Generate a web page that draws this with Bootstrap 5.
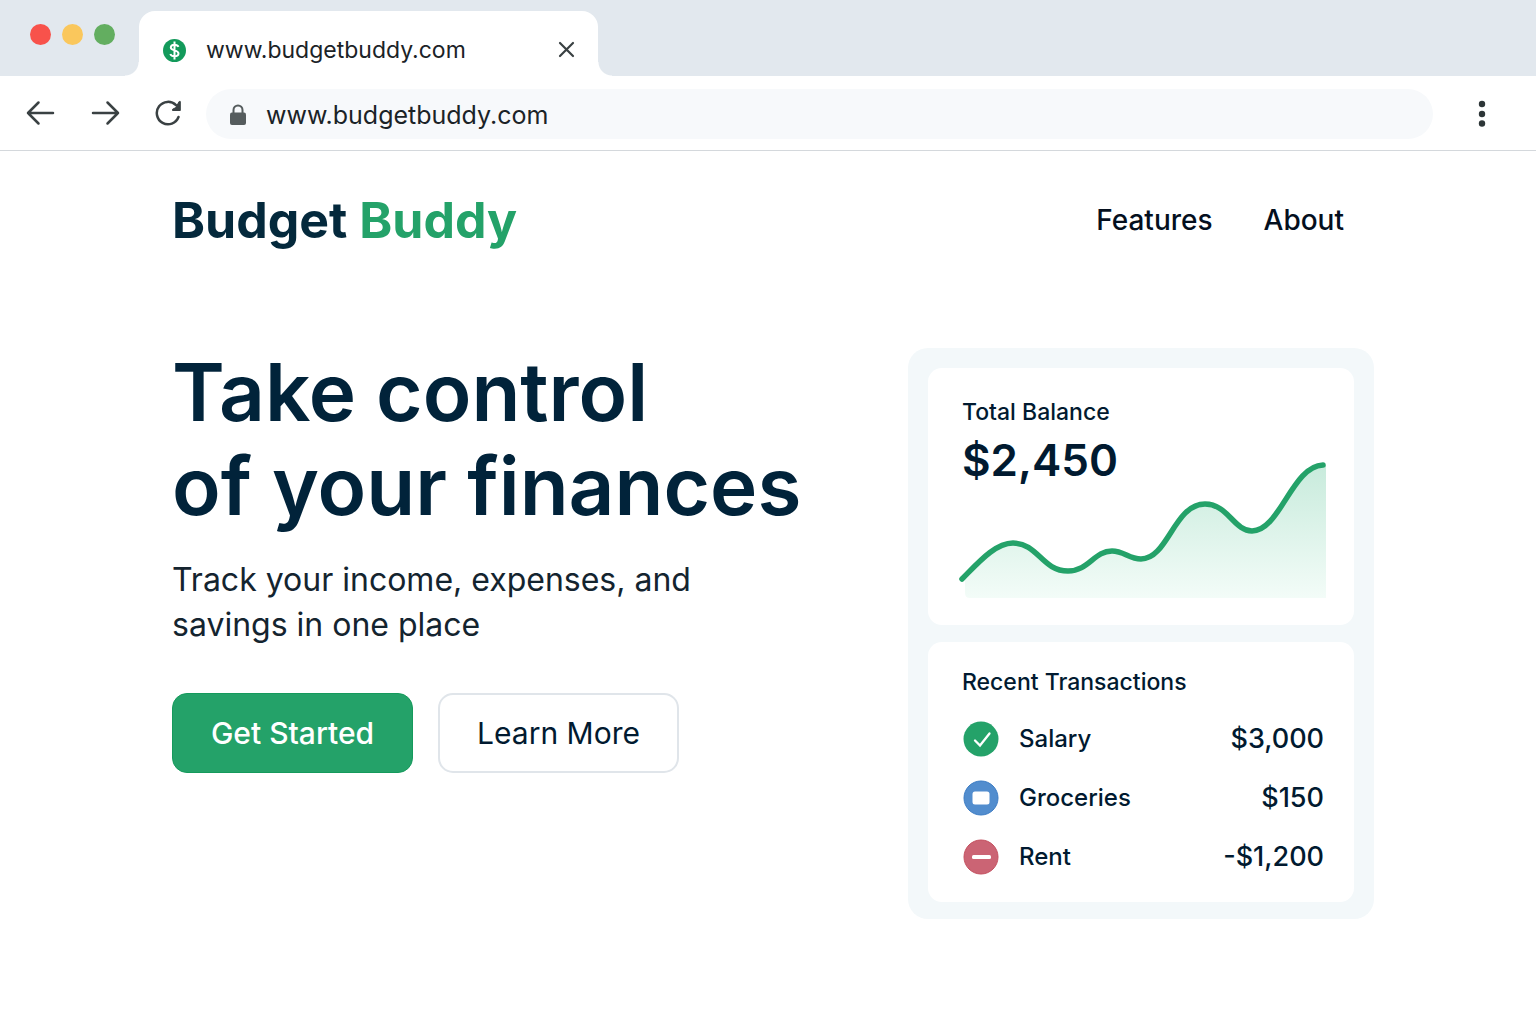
<!DOCTYPE html>
<html lang="en">
<head>
<meta charset="utf-8">
<meta name="viewport" content="width=device-width, initial-scale=1">
<title>Budget Buddy</title>
<link href="https://cdn.jsdelivr.net/npm/bootstrap@5.3.0/dist/css/bootstrap.min.css" rel="stylesheet">
<style>
  :root { --ink: #011a30; --green: #24a269; }
  body { font-family: Inter, "Liberation Sans", sans-serif; color: var(--ink); background: #fff; }
  svg { display: block; flex: none; }

  /* Browser window */
  .tab-strip { background: #e2e8ee; height: 76px; padding-left: 30px; }
  .lights { gap: 11px; padding-top: 24px; margin-right: 24px; }
  .light { width: 21px; height: 21px; border-radius: 50%; }
  .light-close { background: #f8524b; }
  .light-min { background: #fac75c; }
  .light-max { background: #63ae60; }
  .tab { position: relative; width: 459px; height: 65px; background: #fff; border-radius: 16px 16px 0 0; padding: 14px 20px 0 24px; font-size: 23px; color: #1b2327; }
  .tab::before, .tab::after { content: ""; position: absolute; bottom: 0; width: 14px; height: 14px; }
  .tab::before { right: 100%; background: radial-gradient(circle at 0 0, transparent 13px, #fff 14px); }
  .tab::after { left: 100%; background: radial-gradient(circle at 100% 0, transparent 13px, #fff 14px); }
  .plain { background: none; border: 0; padding: 0; color: #3a4143; }
  .toolbar { height: 75px; padding: 2px 48px 0 25px; border-bottom: 1px solid #d4d8dc; }
  .nav-icons { gap: 34px; margin-right: 23px; }
  .address { height: 50px; border-radius: 25px; background: #f7f9fb; padding: 2px 24px 0; margin-right: 43px; }
  .address input { background: none; border: 0; outline: 0; font-size: 25px; line-height: 30px; padding: 0; color: #1b2327; }

  /* Page */
  .page { padding: 0 162px 0 172px; }
  .site-nav { padding: 38px 30px 0 0; }
  .brand { font-size: 50px; line-height: 62px; font-weight: 700; color: #04293c; text-decoration: none; }
  .brand span { color: var(--green); }
  .links { gap: 51px; font-size: 28px; font-weight: 500; }
  .links a { color: #040f1e; text-decoration: none; }
  .hero { padding-top: 97px; }
  .hero h1 { font-size: 80px; line-height: 94px; font-weight: 600; color: #01233a; margin: -3px 0 24px; }
  .intro { font-size: 32px; line-height: 45px; color: #14242f; margin-bottom: 46px; }
  .actions { gap: 25px; }
  .cta { width: 241px; height: 80px; border-radius: 15px; font-size: 30px; padding: 0; }
  .cta-main, .cta-main:hover { background: var(--green); border: 1px solid #159a5c; color: #fff; font-weight: 500; }
  .cta-alt, .cta-alt:hover { background: #fff; border: 2px solid #e0e5ea; color: var(--ink); }

  /* Dashboard preview */
  .preview { width: 466px; flex: none; background: #f3f8fa; border-radius: 20px; padding: 20px 20px 17px; gap: 17px; }
  .panel { background: #fff; border-radius: 14px; padding: 28px 28px 27px 34px; }
  .panel-list { padding-top: 24px; }
  .panel h2 { font-size: 23px; line-height: 32px; font-weight: 500; margin: 0; }
  .balance { font-size: 44px; line-height: 56px; font-weight: 600; margin: 4px 0 0; }
  .chart { width: 364px; height: 138px; overflow: visible; margin-top: -28px; }
  .entry { font-size: 24px; line-height: 36px; font-weight: 500; }
  .entries { gap: 23px; margin-top: 23px; }
  .entry svg { margin: 0 20px 0 1px; }
  .amount { font-size: 27px; margin-right: 2px; }
</style>
</head>
<body>
<header>
  <div class="tab-strip d-flex">
    <div class="lights d-flex">
      <span class="light light-close"></span>
      <span class="light light-min"></span>
      <span class="light light-max"></span>
    </div>
    <div class="tab d-flex align-items-center align-self-end">
      <svg width="23" height="23" viewBox="0 0 23 23" fill="none" stroke="#fff" stroke-width="2"><circle cx="11.500" cy="11.500" r="11.500" fill="#139a5b" stroke="none"/><path d="M15.500 7.800C14.800 6.300 13.300 5.700 11.500 5.700 9.300 5.700 7.800 6.800 7.800 8.500 7.800 12.200 15.500 10.500 15.500 14.500 15.500 16.300 13.800 17.300 11.500 17.300 9.300 17.300 7.900 16.500 7.300 15M11.500 2.500V20.500"/></svg>
      <span class="flex-grow-1 ms-3 ps-1">www.budgetbuddy.com</span>
      <button class="plain" aria-label="Close tab"><svg width="23" height="23" viewBox="0 0 23 23" stroke="currentColor" stroke-width="2.200" stroke-linecap="round"><path d="M5 4 18 17M18 4 5 17"/></svg></button>
    </div>
  </div>
  <div class="toolbar d-flex align-items-center">
    <div class="nav-icons d-flex">
      <button class="plain" aria-label="Back"><svg width="31" height="28" viewBox="0 0 31 28" fill="none" stroke="currentColor" stroke-width="2.500" stroke-linecap="round" stroke-linejoin="round"><path d="M28 13H3M13.500 2.500 3 13 13.500 23.500"/></svg></button>
      <button class="plain" aria-label="Forward"><svg width="31" height="28" viewBox="0 0 31 28" fill="none" stroke="currentColor" stroke-width="2.500" stroke-linecap="round" stroke-linejoin="round"><path d="M3 13H28M17.500 2.500 28 13 17.500 23.500"/></svg></button>
      <button class="plain" aria-label="Reload"><svg width="28" height="28" viewBox="0 0 28 28" fill="none" stroke="currentColor" stroke-width="2.500" stroke-linecap="round"><path d="M23.500 17A11.200 11.200 0 1 1 21 5.200"/><path d="M25.300 1.800V10.500H17.500V9.300L20.800 7.600 24 1.800Z" fill="currentColor" stroke-width="1"/></svg></button>
    </div>
    <div class="address d-flex align-items-center flex-grow-1">
      <svg width="16" height="22" viewBox="0 0 16 22" fill="none"><rect y="8.500" width="16" height="12.500" rx="2" fill="#555c5d"/><path d="M3.500 9V6a4.500 4.500 0 0 1 9 0V9" stroke="#555c5d" stroke-width="2"/></svg>
      <input class="flex-grow-1 ms-3 ps-1" type="text" aria-label="Address" value="www.budgetbuddy.com">
    </div>
    <button class="plain" aria-label="Menu"><svg width="12" height="28" viewBox="0 0 12 28" fill="#2d3638"><circle cx="6" cy="4" r="3.200"/><circle cx="6" cy="14" r="3.200"/><circle cx="6" cy="23.500" r="3.200"/></svg></button>
  </div>
</header>

<div class="page">
  <nav class="site-nav d-flex justify-content-between align-items-center">
    <a class="brand" href="#">Budget <span>Buddy</span></a>
    <div class="links d-flex">
      <a href="#features">Features</a>
      <a href="#about">About</a>
    </div>
  </nav>

  <main class="hero d-flex justify-content-between align-items-start">
    <section>
      <h1>Take control<br>of your finances</h1>
      <p class="intro">Track your income, expenses, and<br>savings in one place</p>
      <div class="actions d-flex">
        <button class="btn cta cta-main">Get Started</button>
        <button class="btn cta cta-alt">Learn More</button>
      </div>
    </section>

    <aside class="preview d-flex flex-column">
      <section class="panel">
        <h2>Total Balance</h2>
        <p class="balance">$2,450</p>
        <svg class="chart" viewBox="0 0 364 138" fill="none" role="img" aria-label="Balance over time">
          <defs><linearGradient id="fade" x1="0" y1="0" x2="0" y2="1"><stop offset="0" stop-color="#c8ebdc"/><stop offset="1" stop-color="#f3fcf8"/></linearGradient></defs>
          <path fill="url(#fade)" d="M3 117C18 103 33 83 51 83C76 83 80 111 106 111C127 111 132 91 150 91C162 91 167 99 179 99C206 99 212 44 243 44C266 44 272 71 290 71C320 71 332 5 364 5V138H8Q3 138 3 133Z"/>
          <path stroke="#24a269" stroke-width="5.500" stroke-linecap="round" d="M0 119C16 103 33 83 51 83C76 83 80 111 106 111C127 111 132 91 150 91C162 91 167 99 179 99C206 99 212 44 243 44C266 44 272 71 290 71C318 71 330 6 361 5"/>
        </svg>
      </section>
      <section class="panel panel-list">
        <h2>Recent Transactions</h2>
        <ul class="entries list-unstyled d-flex flex-column mb-0">
          <li class="entry d-flex align-items-center">
            <svg width="36" height="36" viewBox="0 0 36 36" fill="none"><circle cx="18" cy="18" r="17.500" fill="#24a269"/><path d="M12 19.500 17 24.500 26.500 12.500" stroke="#fff" stroke-width="2.300" stroke-linecap="round"/></svg>
            <span>Salary</span><span class="amount ms-auto">$3,000</span>
          </li>
          <li class="entry d-flex align-items-center">
            <svg width="36" height="36" viewBox="0 0 36 36"><circle cx="18" cy="18" r="17" fill="#528dce" stroke="#3c7cc4"/><rect x="9.500" y="11.500" width="17" height="13" rx="2.500" fill="#fff"/></svg>
            <span>Groceries</span><span class="amount ms-auto">$150</span>
          </li>
          <li class="entry d-flex align-items-center">
            <svg width="36" height="36" viewBox="0 0 36 36"><circle cx="18" cy="18" r="17" fill="#cb6474" stroke="#c4505f"/><rect x="9" y="16" width="19" height="4" rx="1.500" fill="#fff"/></svg>
            <span>Rent</span><span class="amount ms-auto">-$1,200</span>
          </li>
        </ul>
      </section>
    </aside>
  </main>
</div>
<script src="https://cdn.jsdelivr.net/npm/bootstrap@5.3.0/dist/js/bootstrap.bundle.min.js"></script>
</body>
</html>
